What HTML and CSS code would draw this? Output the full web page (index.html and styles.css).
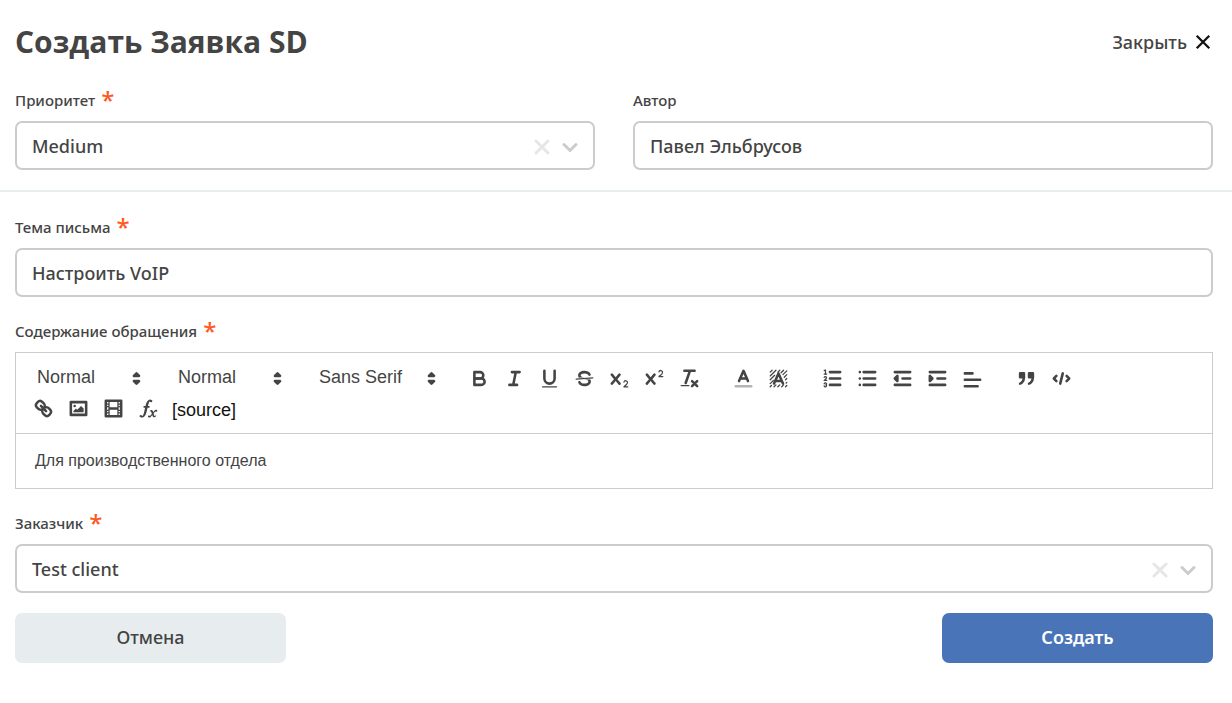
FILE: index.html
```html
<!DOCTYPE html>
<html lang="ru">
<head>
<meta charset="utf-8">
<meta name="viewport" content="width=device-width, initial-scale=1">
<title>Создать Заявка SD</title>
<link rel="stylesheet" href="styles.css">
</head>
<body>
<form class="dialog">
  <header class="header">
    <h1 class="title">Создать Заявка SD</h1>
    <button type="button" class="close">Закрыть
      <svg class="close-icon" viewBox="0 0 14 14"><path d="M1.5 1.5l11 11M12.5 1.5l-11 11"/></svg>
    </button>
  </header>

  <div class="section section-top">
    <div class="field">
      <label class="label" for="priority">Приоритет <span class="required">*</span></label>
      <div class="control">
        <select class="input" id="priority"><option>Medium</option></select>
        <div class="indicators">
          <button type="button" class="clear" aria-label="Очистить"><svg class="indicator" viewBox="0 0 16 16"><path d="M2 2l12 12M14 2L2 14"/></svg></button>
          <svg class="indicator arrow" viewBox="0 0 16 16"><path d="M2 5.5l6 6 6-6"/></svg>
        </div>
      </div>
    </div>
    <div class="field">
      <label class="label" for="author">Автор</label>
      <input class="input" id="author" type="text" value="Павел Эльбрусов">
    </div>
  </div>

  <div class="section section-main">
    <div class="field">
      <label class="label" for="subject">Тема письма <span class="required">*</span></label>
      <input class="input" id="subject" type="text" value="Настроить VoIP">
    </div>

    <div class="field">
      <label class="label" for="content">Содержание обращения <span class="required">*</span></label>
      <div class="editor">
        <div class="toolbar">
          <div class="group">
            <div class="picker">
              <select class="picker-select" aria-label="Заголовок"><option>Normal</option></select>
              <svg class="icon picker-arrow" viewBox="0 0 18 18"><polygon class="fill line" points="7 11 9 13 11 11"/><polygon class="fill line" points="7 7 9 5 11 7"/></svg>
            </div>
          </div>
          <div class="group">
            <div class="picker">
              <select class="picker-select" aria-label="Размер"><option>Normal</option></select>
              <svg class="icon picker-arrow" viewBox="0 0 18 18"><polygon class="fill line" points="7 11 9 13 11 11"/><polygon class="fill line" points="7 7 9 5 11 7"/></svg>
            </div>
          </div>
          <div class="group">
            <div class="picker picker-font">
              <select class="picker-select" aria-label="Шрифт"><option>Sans Serif</option></select>
              <svg class="icon picker-arrow" viewBox="0 0 18 18"><polygon class="fill line" points="7 11 9 13 11 11"/><polygon class="fill line" points="7 7 9 5 11 7"/></svg>
            </div>
          </div>
          <div class="group">
            <button type="button" class="tool" aria-label="Полужирный"><svg class="icon" viewBox="0 0 18 18"><path class="line" d="M5,4H9.5A2.5,2.5,0,0,1,12,6.5v0A2.5,2.5,0,0,1,9.5,9H5A0,0,0,0,1,5,9V4Z"/><path class="line" d="M5,9h5.5A2.5,2.5,0,0,1,13,11.5v0A2.5,2.5,0,0,1,10.5,14H5V9Z"/></svg></button>
            <button type="button" class="tool" aria-label="Курсив"><svg class="icon" viewBox="0 0 18 18"><path class="line" d="M7 4H13M5 14H11M8 14L10 4"/></svg></button>
            <button type="button" class="tool" aria-label="Подчёркнутый"><svg class="icon" viewBox="0 0 18 18"><path class="line" d="M5,3V9a4.012,4.012,0,0,0,4,4H9a4.012,4.012,0,0,0,4-4V3"/><rect class="fill" x="3" y="15" width="12" height="1" rx=".5"/></svg></button>
            <button type="button" class="tool" aria-label="Зачёркнутый"><svg class="icon" viewBox="0 0 18 18"><path class="line thin" d="M15.5 8.5L2.5 9.5"/><path class="fill" d="M9.007,8C6.542,7.791,6,7.519,6,6.5,6,5.792,7.283,5,9,5c1.571,0,2.765.679,2.969,1.309a1,1,0,0,0,1.9-.617C13.356,4.106,11.354,3,9,3,6.2,3,4,4.538,4,6.5a3.2,3.2,0,0,0,.5,1.843Z"/><path class="fill" d="M8.984,10C11.457,10.208,12,10.479,12,11.5c0,0.708-1.283,1.5-3,1.5-1.571,0-2.765-.679-2.969-1.309a1,1,0,1,0-1.9.617C4.644,13.894,6.646,15,9,15c2.8,0,5-1.538,5-3.5a3.2,3.2,0,0,0-.5-1.843Z"/></svg></button>
            <button type="button" class="tool" aria-label="Нижний индекс"><svg class="icon" viewBox="0 0 18 18"><path class="fill" d="M15.5,15H13.861a3.858,3.858,0,0,0,1.914-2.975,1.8,1.8,0,0,0-1.6-1.751A1.921,1.921,0,0,0,12.021,11.7a0.50013,0.50013,0,1,0,.957.291h0a0.914,0.914,0,0,1,1.053-.725,0.81,0.81,0,0,1,.744.762c0,1.076-1.16971,1.86982-1.93971,2.43082A1.45639,1.45639,0,0,0,12,15.5a0.5,0.5,0,0,0,.5.5h3A0.5,0.5,0,0,0,15.5,15Z"/><path class="fill" d="M9.65,5.241a1,1,0,0,0-1.409.108L6,7.964,3.759,5.349A1,1,0,0,0,2.192,6.59178Q2.21541,6.6213,2.241,6.649L4.684,9.5,2.241,12.35A1,1,0,0,0,3.71,13.70722q0.02557-.02768.049-0.05722L6,11.036,8.241,13.65a1,1,0,1,0,1.567-1.24277Q9.78459,12.3777,9.759,12.35L7.316,9.5,9.759,6.651A1,1,0,0,0,9.65,5.241Z"/></svg></button>
            <button type="button" class="tool" aria-label="Верхний индекс"><svg class="icon" viewBox="0 0 18 18"><path class="fill" d="M15.5,7H13.861a4.015,4.015,0,0,0,1.914-2.975,1.8,1.8,0,0,0-1.6-1.751A1.922,1.922,0,0,0,12.021,3.7a0.5,0.5,0,1,0,.957.291,0.917,0.917,0,0,1,1.053-.725,0.81,0.81,0,0,1,.744.762c0,1.077-1.164,1.925-1.934,2.486A1.423,1.423,0,0,0,12,7.5a0.5,0.5,0,0,0,.5.5h3A0.5,0.5,0,0,0,15.5,7Z"/><path class="fill" d="M9.651,5.241a1,1,0,0,0-1.41.108L6,7.964,3.759,5.349a1,1,0,1,0-1.519,1.3L4.683,9.5,2.241,12.35a1,1,0,1,0,1.519,1.3L6,11.036,8.241,13.65a1,1,0,0,0,1.519-1.3L7.317,9.5,9.759,6.651A1,1,0,0,0,9.651,5.241Z"/></svg></button>
            <button type="button" class="tool" aria-label="Очистить форматирование"><svg class="icon" viewBox="0 0 18 18"><path class="line" d="M5 3H13M6 12.5L9.35 3M11 11l4 4M15 11l-4 4"/><rect class="fill" x="2" y="14" width="7" height="1" rx=".5"/></svg></button>
          </div>
          <div class="group">
            <button type="button" class="tool" aria-label="Цвет текста"><svg class="icon" viewBox="0 0 18 18"><path class="line pale" d="M3 15H15"/><path class="line" d="M5.5 11L9 3l3.500 8M11.630 9H6.380"/></svg></button>
            <button type="button" class="tool" aria-label="Цвет фона"><svg class="icon" viewBox="0 0 18 18"><path class="line hatch" d="M2.500 4L4 2.500M2.500 7L7 2.500M2.500 10L6 6.500M8.500 4L10 2.500M2.500 13L5 10.500M11 4.500L13 2.500M2.500 15.500L3.500 14.500M12.500 6L15.500 3M13.500 8L15.500 6M14.500 10L15.500 9M15 12.500L15.500 12M5.500 15.500L7 14M8.500 15.500L10 14M11.500 15.500L13 14M14.500 15.500L15.500 14.500"/><path class="line" d="M5.500 13L9 5l3.500 8M11.630 11H6.380"/></svg></button>
          </div>
          <div class="group">
            <button type="button" class="tool" aria-label="Нумерованный список"><svg class="icon" viewBox="0 0 18 18"><path class="line" d="M7 4H15M7 9H15M7 14H15"/><path class="line thin" d="M2.500 5.500H4.500"/><path class="fill" d="M3.500,6A0.500,0.500,0,0,1,3,5.500V3.085l-0.276.138A0.500,0.500,0,0,1,2.053,3c-0.124-.247-0.023-0.500.224-0.600l1-.5A0.500,0.500,0,0,1,4,2.400v3.100A0.500,0.500,0,0,1,3.500,6Z"/><path class="line thin" d="M4.500,10.500h-2c0-.234,1.850-1.076,1.850-2.234A0.959,0.959,0,0,0,2.500,8.156M2.500,14.846a0.959,0.959,0,0,0,1.850-.109A0.700,0.700,0,0,0,3.750,14a0.688,0.688,0,0,0,.600-.736,0.959,0.959,0,0,0-1.850-.109"/></svg></button>
            <button type="button" class="tool" aria-label="Маркированный список"><svg class="icon" viewBox="0 0 18 18"><path class="line" d="M6 4H15M6 9H15M6 14H15M3 4h.01M3 9h.01M3 14h.01"/></svg></button>
            <button type="button" class="tool" aria-label="Уменьшить отступ"><svg class="icon" viewBox="0 0 18 18"><path class="line" d="M3 14H15M3 4H15M9 9H15"/><polygon class="fill line" points="5 7 5 11 3 9"/></svg></button>
            <button type="button" class="tool" aria-label="Увеличить отступ"><svg class="icon" viewBox="0 0 18 18"><path class="line" d="M3 14H15M3 4H15M9 9H15"/><polygon class="fill line" points="3 7 3 11 5 9"/></svg></button>
            <button type="button" class="tool" aria-label="Выравнивание"><svg class="icon" viewBox="0 0 18 18"><path class="line" d="M3 10H15M3 15H13M3 5H9"/></svg></button>
          </div>
          <div class="group">
            <button type="button" class="tool" aria-label="Цитата"><svg class="icon" viewBox="0 0 18 18"><rect class="fill line" x="4" y="5" width="3" height="3"/><rect class="fill line" x="11" y="5" width="3" height="3"/><path class="fill line" d="M7,8c0,4.031-3,5-3,5M14,8c0,4.031-3,5-3,5"/></svg></button>
            <button type="button" class="tool" aria-label="Код"><svg class="icon" viewBox="0 0 18 18"><path class="line" d="M5 7L3 9l2 2M13 7l2 2-2 2M10 5L8 13"/></svg></button>
          </div>
          <div class="group group-media">
            <button type="button" class="tool" aria-label="Ссылка"><svg class="icon" viewBox="0 0 18 18"><path class="line" d="M7 7L11 11"/><path class="line" d="M8.900,4.577a3.476,3.476,0,0,1,.360,4.679A3.476,3.476,0,0,1,4.577,8.900C3.185,7.500,2.035,6.400,4.217,4.217S7.500,3.185,8.900,4.577Z"/><path class="line" d="M13.423,9.100a3.476,3.476,0,0,0-4.679-.360,3.476,3.476,0,0,0,.360,4.679c1.392,1.392,2.500,2.542,4.679.360S14.815,10.500,13.423,9.100Z"/></svg></button>
            <button type="button" class="tool" aria-label="Изображение"><svg class="icon" viewBox="0 0 18 18"><rect class="line" x="3" y="4" width="12" height="10"/><circle class="fill" cx="6" cy="7" r="1"/><polygon class="fill" points="5 12 5 11 7 9 8 10 11 7 13 9 13 12"/></svg></button>
            <button type="button" class="tool" aria-label="Видео"><svg class="icon" viewBox="0 0 18 18"><rect class="line" x="3" y="3" width="12" height="12"/><path class="fill" d="M5 3h1v12H5zM12 3h1v12h-1zM5 8h8v2H5zM3 5h3v1H3zM3 7h3v1H3zM3 10h3v1H3zM3 12h3v1H3zM12 5h3v1h-3zM12 7h3v1h-3zM12 10h3v1h-3zM12 12h3v1h-3z"/></svg></button>
            <button type="button" class="tool" aria-label="Формула"><svg class="icon" viewBox="0 0 18 18"><path class="fill" d="M11.759,2.482a2.561,2.561,0,0,0-3.530.607A7.656,7.656,0,0,0,6.800,6.200C6.109,9.188,5.275,14.677,4.150,14.927a1.545,1.545,0,0,0-1.300-.933A0.922,0.922,0,0,0,2,15.036S1.954,16,4.119,16s3.091-2.691,3.700-5.553c0.177-.826.360-1.726,0.554-2.600L8.775,6.200c0.381-1.421.807-2.521,1.306-2.676a1.014,1.014,0,0,0,1.020.560A0.966,0.966,0,0,0,11.759,2.482Z"/><rect class="fill" x="5" y="7" width="5" height="1.500" rx=".6"/><path class="fill" d="M10 10.700c1-.900 2-.800 2.400.3l.300.900c.700-1.100 1.400-1.900 2.200-1.900.700 0 1 .4 1 .8 0 .7-.9 1-1.400.5-.5.100-1.100.900-1.500 1.700l.5 1.500c.2.600.6.500 1.300-.2l.3.300c-1.100 1.600-2.500 1.700-2.900.3l-.3-.8c-.8 1.300-1.500 2-2.300 2-.6 0-1-.3-1-.8 0-.7.8-1 1.400-.5.600-.2 1.100-.9 1.600-1.700l-.5-1.400c-.200-.6-.5-.6-.9-.2z"/></svg></button>
            <button type="button" class="source">[source]</button>
          </div>
        </div>
        <textarea class="editor-body" id="content" rows="1">Для производственного отдела</textarea>
      </div>
    </div>

    <div class="field">
      <label class="label" for="client">Заказчик <span class="required">*</span></label>
      <div class="control">
        <select class="input" id="client"><option>Test client</option></select>
        <div class="indicators">
          <button type="button" class="clear" aria-label="Очистить"><svg class="indicator" viewBox="0 0 16 16"><path d="M2 2l12 12M14 2L2 14"/></svg></button>
          <svg class="indicator arrow" viewBox="0 0 16 16"><path d="M2 5.500l6 6 6-6"/></svg>
        </div>
      </div>
    </div>
  </div>

  <footer class="footer">
    <button type="button" class="button button-cancel">Отмена</button>
    <button type="submit" class="button button-submit">Создать</button>
  </footer>
</form>
</body>
</html>
```
FILE: styles.css
```css
* { box-sizing: border-box; }

body {
  margin: 0;
  background: #fff;
  color: #444;
  font-family: "Noto Sans", "Open Sans", sans-serif;
  font-size: 18px;
  font-weight: 500;
}

button, input, select, textarea {
  margin: 0;
  color: inherit;
  font: inherit;
}

button {
  padding: 0;
  border: 0;
  background: none;
  cursor: pointer;
}

.header {
  display: flex;
  align-items: center;
  justify-content: space-between;
  height: 87px;
  padding: 0 21px 4px 15px;
}

.title {
  margin: 0;
  font-family: "Open Sans", "Noto Sans", sans-serif;
  font-size: 30px;
  font-weight: 700;
  line-height: 40px;
}

.close {
  display: flex;
  align-items: center;
  gap: 8px;
}

.close-icon {
  width: 16px;
  height: 16px;
  fill: none;
  stroke: #111;
  stroke-width: 2;
}

.section {
  display: grid;
  padding: 0 19px 0 15px;
}

.section-top {
  grid-template-columns: 1fr 1fr;
  gap: 38px;
  padding-bottom: 20px;
  border-bottom: 2px solid #e7ecef;
}

.section-main {
  gap: 21px;
  padding-top: 22px;
}

.label {
  display: flex;
  gap: 6px;
  height: 24px;
  margin-bottom: 10px;
  font-size: 15px;
  line-height: 26px;
}

.required {
  color: #ff5722;
  font-size: 24px;
  font-weight: 500;
}

.control {
  position: relative;
}

.input {
  display: block;
  width: 100%;
  height: 49px;
  padding: 0 15px;
  border: 2px solid #ccc;
  border-radius: 7px;
  background: #fff;
  appearance: none;
}

.indicators {
  position: absolute;
  top: 0;
  right: 17px;
  bottom: 0;
  display: flex;
  align-items: center;
  gap: 12px;
  padding-top: 2px;
}

.clear { display: flex; }

.indicator {
  width: 16px;
  height: 16px;
  fill: none;
  stroke: #e6e6e6;
  stroke-width: 3;
  stroke-linecap: round;
}

.arrow {
  stroke: #ccc;
  pointer-events: none;
}

.editor {
  border: 1px solid #ccc;
  font-family: "Liberation Sans", Arial, sans-serif;
  font-size: 18px;
  font-weight: 400;
}

.toolbar {
  display: flex;
  flex-wrap: wrap;
  padding: 10px;
  border-bottom: 1px solid #ccc;
}

.group {
  display: flex;
  margin-right: 19px;
}

.picker {
  display: grid;
  align-items: center;
  width: 122px;
  height: 30px;
}

.picker-font { width: 135px; }

.picker-select {
  grid-area: 1 / 1;
  height: 28px;
  padding: 0 0 2px 11px;
  border: 0;
  background: none;
  appearance: none;
}

.picker-arrow {
  grid-area: 1 / 1;
  justify-self: end;
  pointer-events: none;
}

.tool {
  display: flex;
  align-items: center;
  justify-content: center;
  width: 35px;
  height: 30px;
}

.icon {
  width: 23px;
  height: 23px;
}

.line {
  fill: none;
  stroke: #444;
  stroke-width: 2;
  stroke-linecap: round;
  stroke-linejoin: round;
}

.line.fill { fill: #444; }
.thin { stroke-width: 1; }
.hatch { stroke-width: 1; }
.pale { opacity: .4; }
.fill { fill: #444; }

.source {
  height: 30px;
  padding: 4px 6px 0;
  color: #111;
}

.editor-body {
  display: block;
  width: 100%;
  height: 54px;
  padding: 17px 19px;
  border: 0;
  background: #fff;
  font-size: 16px;
  line-height: 20px;
  resize: none;
}

.footer {
  display: flex;
  justify-content: space-between;
  padding: 20px 19px 40px 15px;
}

.button {
  width: 271px;
  height: 50px;
  padding-bottom: 2px;
  border-radius: 7px;
}

.button-cancel { background: #e7edef; }

.button-submit {
  background: #4a74b8;
  color: #fff;
  font-weight: 600;
}
```
